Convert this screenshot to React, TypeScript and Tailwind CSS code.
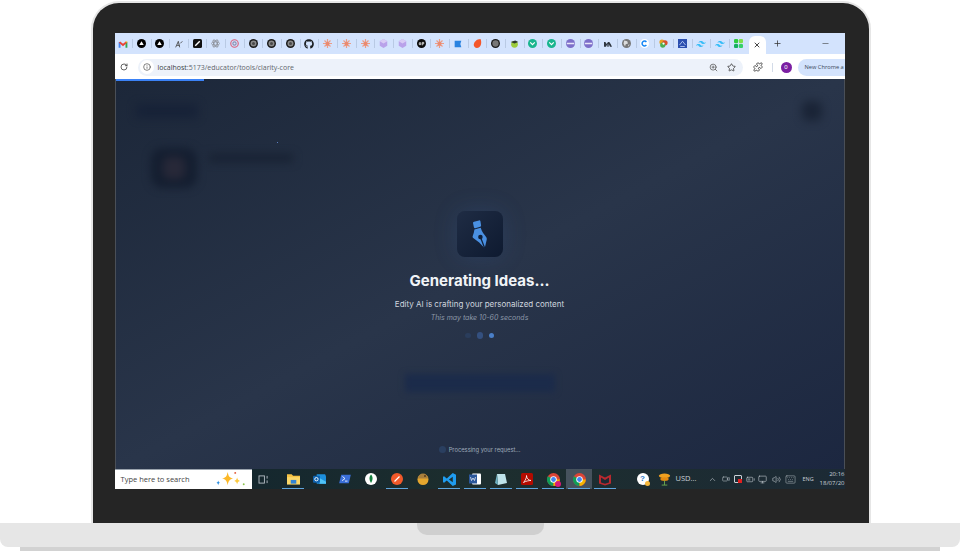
import React from "react";
import { RotateCw, Star, Puzzle, X, Plus, Minus, Info, ZoomIn, ChevronUp, Volume2, Monitor, Keyboard, BatteryMedium, Video } from "lucide-react";
import { FaGithub } from "react-icons/fa";
import { SiTailwindcss } from "react-icons/si";

const Gmail = () => (
  <svg viewBox="0 0 16 12" className="w-[10px] h-[8px]" fill="none" strokeWidth="3">
    <path d="M2.500 12V3" stroke="#4285f4" />
    <path d="M13.500 12V3" stroke="#34a853" />
    <path d="M2.500 3L8 7.500 13.500 3" stroke="#ea4335" />
    <path d="M13.500 3.500V2" stroke="#fbbc04" />
  </svg>
);
const Dot = ({ c, inner }: { c: string; inner?: React.ReactNode }) => (
  <svg viewBox="0 0 12 12" className="w-[9px] h-[9px]"><circle cx="6" cy="6" r="6" fill={c} />{inner}</svg>
);
const tri = <path d="M6 3l3 5H3z" fill="#fff" />;
const target = <><circle cx="6" cy="6" r="4" fill="#8a8a8a" /><circle cx="6" cy="6" r="2" fill="#4a4a4a" /></>;
const Asterisk = () => (
  <svg viewBox="0 0 12 12" className="w-[9px] h-[9px]" stroke="#ec9c86" strokeWidth="1.600"><path d="M6 0v12M0 6h12M2 2l8 8M10 2l-8 8" /><circle cx="6" cy="6" r="2.500" fill="#e98a70" stroke="none" /></svg>
);
const Cube = () => (
  <svg viewBox="0 0 12 12" className="w-[9px] h-[9px]"><path d="M6 0l5 3v6l-5 3-5-3V3z" fill="#b9a2ea" /><path d="M1 3l5 3 5-3-5-3z" fill="#d9ccf5" /></svg>
);
const Shield = () => (
  <svg viewBox="0 0 12 12" className="w-[9px] h-[9px]"><circle cx="6" cy="6" r="6" fill="#19b58e" /><path d="M3 4.500l3 3 3-3" stroke="#fff" strokeWidth="1.600" fill="none" /></svg>
);
const PurpleC = () => (
  <svg viewBox="0 0 12 12" className="w-[9px] h-[9px]"><circle cx="6" cy="6" r="6" fill="#7d6fc9" /><path d="M1 5h10v2H1z" fill="#e8e6f8" /></svg>
);
const Wind = () => <SiTailwindcss className="w-[10px] h-[10px] text-[#38bdf8]" />;

const tabs: React.ReactNode[] = [
  <Gmail />, <Dot c="#000" inner={tri} />, <Dot c="#000" inner={tri} />,
  <svg viewBox="0 0 12 12" className="w-[8px] h-[8px]"><path d="M1 11L5 2l2 9M8 5l3-3M3 8h4" stroke="#444" strokeWidth="1.300" fill="none" /></svg>,
  <svg viewBox="0 0 12 12" className="w-[9px] h-[9px]"><rect width="12" height="12" rx="2" fill="#111" /><path d="M3 9l6-6" stroke="#fff" strokeWidth="2" /></svg>,
  <svg viewBox="0 0 12 12" className="w-[9px] h-[9px]" fill="none" stroke="#8a8f98" strokeWidth="1.100"><ellipse cx="6" cy="6" rx="5.500" ry="2.200" /><ellipse cx="6" cy="6" rx="5.500" ry="2.200" transform="rotate(60 6 6)" /><ellipse cx="6" cy="6" rx="5.500" ry="2.200" transform="rotate(120 6 6)" /></svg>,
  <svg viewBox="0 0 12 12" className="w-[9px] h-[9px]" fill="none"><circle cx="6" cy="6" r="5" stroke="#d9607a" strokeWidth="1.500" /><circle cx="6" cy="6" r="2.200" stroke="#8a8fb0" strokeWidth="1.500" /></svg>,
  <Dot c="#1a1a1a" inner={target} />, <Dot c="#1a1a1a" inner={target} />, <Dot c="#1a1a1a" inner={target} />,
  <FaGithub className="w-[10px] h-[10px] text-[#1b1f23]" />,
  <Asterisk />, <Asterisk />, <Asterisk />, <Cube />, <Cube />,
  <Dot c="#0a0a0a" inner={<path d="M3 5v2.500h2V5zM7 4.500v4M7 4.500h2v2H7" stroke="#fff" strokeWidth="1" fill="none" />} />,
  <Asterisk />,
  <svg viewBox="0 0 12 12" className="w-[8px] h-[8px]"><path d="M1 1h10l-1.500 5L11 11H1z" fill="#2a83e0" /></svg>,
  <svg viewBox="0 0 12 12" className="w-[9px] h-[9px]"><path d="M1 8c0-4 4-8 9-8 2 4 1 12-5 12-2 0-4-2-4-4z" fill="#f4562a" /></svg>,
  <Dot c="#1a1a1a" inner={<circle cx="6" cy="6" r="4.200" fill="#777" />} />,
  <svg viewBox="0 0 12 12" className="w-[9px] h-[9px]"><circle cx="6" cy="7" r="4.500" fill="#9ccc3c" /><path d="M1 4l6-2 4 2-5 2z" fill="#2c3a2c" /></svg>,
  <Shield />, <Shield />, <PurpleC />, <PurpleC />,
  <svg viewBox="0 0 12 8" className="w-[8px] h-[6px]"><path d="M0 8V1h2l2 3 2-3h2l2 3 2 4H9L7 4v4H5V4L3 8z" fill="#2f3640" /></svg>,
  <Dot c="#777" inner={<path d="M3 2l4 1 1 3-3 1-1 3-2-4zM8 8l2-1-1 3z" fill="#dcdcdc" />} />,
  <Dot c="#fff" inner={<path d="M8.500 8a3.200 3.200 0 1 1 0-4" stroke="#1585f5" strokeWidth="2" fill="none" />} />,
  <svg viewBox="0 0 12 12" className="w-[9px] h-[9px]"><circle cx="4" cy="4" r="3.500" fill="#e8a020" /><circle cx="8" cy="5" r="3.500" fill="#d8502c" /><circle cx="5" cy="8" r="3.500" fill="#4caf50" /><circle cx="6" cy="6" r="1.500" fill="#fff" /></svg>,
  <svg viewBox="0 0 12 12" className="w-[9px] h-[9px]"><rect width="12" height="12" fill="#2b4fb0" /><path d="M2 8l4-5 4 5M3 10h6" stroke="#cfe0ff" fill="none" /></svg>,
  <Wind />, <Wind />,
  <svg viewBox="0 0 12 12" className="w-[9px] h-[9px]"><rect x="0" y="0" width="5.500" height="5.500" rx="1.500" fill="#2ecc40" /><rect x="6.500" y="0" width="5.500" height="5.500" rx="1.500" fill="#7de04a" /><rect x="0" y="6.500" width="5.500" height="5.500" rx="1.500" fill="#16b060" /><rect x="6.500" y="6.500" width="5.500" height="5.500" rx="1.500" fill="#36d06a" /></svg>,
];

const Folder = () => (
  <svg viewBox="0 0 14 12" className="w-[13px] h-[12px]"><path d="M0 1h5l1.500 1.500H14V11H0z" fill="#f6c244" /><rect x="0" y="4" width="14" height="8" fill="#fbd768" /><rect x="4" y="7" width="6" height="4" fill="#2f83d4" /></svg>
);
const ChromeIcon = ({ size }: { size: string }) => (
  <svg viewBox="0 0 12 12" className={size}><circle cx="6" cy="6" r="6" fill="#db4437" /><path d="M6 6L.8 3A6 6 0 0 0 6 12z" fill="#0f9d58" /><path d="M6 6h5.800A6 6 0 0 1 6 12z" fill="#f4b400" /><circle cx="6" cy="6" r="3" fill="#fff" /><circle cx="6" cy="6" r="2.200" fill="#4285f4" /></svg>
);

const apps: { el: React.ReactNode; on?: boolean; active?: boolean }[] = [
  { el: <Folder />, on: true },
  { el: <svg viewBox="0 0 14 12" className="w-[13px] h-[12px]"><path d="M4 1h9l1 2v8H4z" fill="#1d8fdc" /><path d="M7 5l7 4v2H7z" fill="#4fc3f7" /><rect y="2.500" width="7.500" height="7.500" rx="1" fill="#0f62ae" /><circle cx="3.700" cy="6.200" r="1.800" fill="none" stroke="#fff" /></svg> },
  { el: <svg viewBox="0 0 14 12" className="w-[12px] h-[10px]"><path d="M2.500 1H14l-2.500 10H0z" fill="#3a6fd8" /><path d="M4 3l3 2.500L3.500 8M7 8.500h3" stroke="#fff" fill="none" /></svg> },
  { el: <svg viewBox="0 0 12 12" className="w-[12px] h-[12px]"><circle cx="6" cy="6" r="6" fill="#fff" /><path d="M6 1.500c2 2 2.200 5 0 8.500-2.200-3.500-2-6.500 0-8.500z" fill="#13803f" /></svg> },
  { el: <svg viewBox="0 0 12 12" className="w-[12px] h-[12px]"><circle cx="6" cy="6" r="6" fill="#f1592a" /><path d="M3.500 8.500L8.500 3.500" stroke="#fff" strokeWidth="1.300" /></svg>, on: true },
  { el: <svg viewBox="0 0 12 12" className="w-[12px] h-[12px]"><circle cx="6" cy="6.500" r="5.500" fill="#e4a62e" /><path d="M1 5.500a5 5 0 0 1 10 0z" fill="#a97f3c" /><circle cx="8" cy="3" r="1" fill="#5a3b1a" /></svg> },
  { el: <svg viewBox="0 0 12 12" className="w-[13px] h-[13px]"><path d="M9 0l3 1.500v9L9 12 3.500 7 1 9 0 8.500v-5L1 3l2.500 2zM9 3.500L5.500 6 9 8.500z" fill="#1f9cf0" /></svg>, on: true },
  { el: <svg viewBox="0 0 12 12" className="w-[12px] h-[12px]"><rect x="3" y="0.500" width="9" height="11" rx="1" fill="#fff" /><rect x="0" y="1.500" width="8" height="9" fill="#2b579a" /><path d="M1.500 4l1 3.500L4 5l1.500 2.500L6.500 4" stroke="#fff" strokeWidth=".7" fill="none" /></svg>, on: true },
  { el: <svg viewBox="0 0 12 12" className="w-[12px] h-[12px]"><path d="M2 1h8l2 9-9 2z" fill="#bfe3ea" /><path d="M2 1L0 10l3 2z" fill="#6fb3c4" /></svg>, on: true },
  { el: <svg viewBox="0 0 12 12" className="w-[12px] h-[12px]"><rect width="12" height="12" rx="1.500" fill="#b30b00" /><path d="M2.500 9.500C4 8 6 4 5.500 2.500 5.500 5 7.500 7.500 10 7.500c-2 0-5 .5-7.500 2z" stroke="#fff" strokeWidth=".8" fill="none" /></svg>, on: true },
  { el: <div className="relative flex"><ChromeIcon size="w-[13px] h-[13px]" /><span className="absolute -right-[1px] -bottom-[1px] w-[6px] h-[6px] rounded-full bg-[#d81b7a]" /></div>, on: true },
  { el: <ChromeIcon size="w-[13px] h-[13px]" />, on: true, active: true },
  { el: <svg viewBox="0 0 12 12" className="w-[12px] h-[13px]"><path d="M0 1l6 3 6-3v9l-6 2-6-2z" fill="#b8292f" /><path d="M2 4l4 2.500L10 4v5l-4 1.300L2 9z" fill="#1d2a33" /></svg>, on: true },
];

const PenNib = () => (
  <svg viewBox="0 0 16 30" className="w-[16px] h-[30px]">
    <path d="M2 2.700l5-1.300q1.200-.2 1.500 1l.6 4q.1 1-.9 1.300l-5 1.500q-1 .2-1.300-.9L1 4q-.2-1 1-1.300z" fill="#4a90e2" />
    <path d="M2.400 10.600L8.700 8.800c1 4 3.500 6.500 5.600 9.500.6 1 .6 2 .3 3l-1.900 8-5.500-5.800L1.200 19c-.8-.8-.7-1.700-.3-2.600.8-2 1.300-3.800 1.500-5.800z" fill="#4a90e2" />
    <circle cx="8.400" cy="18" r="2.300" fill="#10203a" />
    <path d="M8.400 18l4.200 11" stroke="#10203a" strokeWidth="1.300" />
  </svg>
);

export default function App() {
  return (
    <div className="w-[961px] h-[551px] bg-white overflow-hidden font-['Liberation_Sans',sans-serif]">
      {/* lid */}
      <div className="ml-[91px] w-[780px] h-[522px] mt-[1px] rounded-t-[28px] border-x-[2.500px] border-t-2 border-[#e6e6e6] bg-[#252525] pt-[30px] pl-[21.500px]">
        <div className="w-[730px] h-[456px] flex flex-col overflow-hidden bg-white">
          {/* tab strip */}
          <div className="h-[21px] bg-[#d3e3fd] flex items-center shrink-0">
            <div className="-ml-[1.300px]" />
            {tabs.map((t, i) => (
              <div key={i} className="w-[18.670px] h-[21px] flex items-center justify-center relative shrink-0">
                {t}
                {i > 0 && <span className="absolute left-0 top-[6px] h-[9px] w-px bg-[#b9cae4]" />}
              </div>
            ))}
            <div className="w-[17px] h-[18px] mt-[3px] ml-px bg-white rounded-t-[6px] flex items-center justify-center shrink-0">
              <X className="w-[8px] h-[8px] text-[#222]" strokeWidth={2.500} />
            </div>
            <Plus className="w-[9px] h-[9px] ml-[7.500px] text-[#333]" strokeWidth={2} />
            <Minus className="w-[9px] h-[9px] ml-[39px] text-[#333]" strokeWidth={1.500} />
          </div>
          {/* address bar */}
          <div className="h-[25px] bg-white flex items-center shrink-0 pt-px">
            <RotateCw className="w-[8px] h-[8px] ml-[5px] text-[#444] shrink-0" strokeWidth={2.500} />
            <div className="ml-[10px] w-[605px] h-[17px] shrink-0 rounded-full bg-[#edf2fa] flex items-center">
              <div className="w-[14px] h-[14px] ml-[2px] rounded-full bg-white flex items-center justify-center">
                <Info className="w-[8px] h-[8px] text-[#444]" strokeWidth={2} />
              </div>
              <span className="ml-[4px] text-[7px] leading-none text-[#5f656c] font-['Open_Sans',sans-serif] whitespace-nowrap"><span className="text-[#3a3f45]">localhost</span>:5173/educator/tools/clarity-core</span>
              <div className="ml-auto flex items-center gap-[9px] mr-[7px]">
                <ZoomIn className="w-[9px] h-[9px] text-[#555]" strokeWidth={2} />
                <Star className="w-[9px] h-[9px] text-[#333]" strokeWidth={2} />
              </div>
            </div>
            <Puzzle className="w-[10px] h-[10px] ml-[10px] text-[#333] shrink-0" strokeWidth={2} />
            <span className="ml-[9px] h-[9px] w-px bg-[#d3dbe8] shrink-0" />
            <div className="ml-[8px] w-[11px] h-[11px] shrink-0 rounded-full bg-[#7b1fa2] text-white text-[6px] leading-none flex items-center justify-center">0</div>
            <div className="ml-[6px] flex-1 h-[17px] rounded-l-full bg-[#d3e3fd] flex items-center pl-[7px]">
              <span className="text-[5.700px] text-[#3c4a5c] whitespace-nowrap font-['Open_Sans',sans-serif]">New Chrome a</span>
            </div>
          </div>
          {/* page */}
          <div className="relative flex-1 overflow-hidden bg-gradient-to-br from-[#1c2739] via-[#29354a] to-[#1c2740] border-x border-[#4a4f57]">
            <div className="h-[2px] w-[88px] bg-[#3b82f6]" />
            <div className="flex items-center justify-between pl-[20px] pr-[22px] pt-[20px] blur-[5px] opacity-70">
              <div className="w-[62px] h-[14px] bg-[#141f36]" />
              <div className="w-[20px] h-[20px] rounded-md bg-[#141d2e]" />
            </div>
            <div className="flex items-center gap-[12px] pl-[35px] pt-[27px] blur-[4px]">
              <div className="w-[46px] h-[40px] rounded-xl bg-[#141e30] flex items-center justify-center">
                <div className="w-[22px] h-[22px] rounded-md bg-[#272838]" />
              </div>
              <div className="w-[84px] h-[8px] mb-[20px] bg-[#182233]" />
            </div>
            <span className="absolute left-[161px] top-[63px] w-px h-px bg-[#5b7fc0]" />
            {/* overlay content */}
            <div className="absolute inset-0 flex flex-col items-center">
              <div className="mt-[132px] w-[46px] h-[46px] rounded-[8px] bg-gradient-to-br from-[#1f2c44] to-[#0e1a30] flex items-center justify-center shadow-[0_0_24px_rgba(60,110,190,0.18)]">
                <PenNib />
              </div>
              <h1 className="mt-[14px] text-[15px] leading-[20px] font-bold text-[#f1f4f8] font-['Inter',sans-serif] whitespace-nowrap">Generating Ideas...</h1>
              <p className="mt-[7px] text-[8px] leading-[12px] text-[#d0d6df] font-['Inter',sans-serif] whitespace-nowrap">Edity AI is crafting your personalized content</p>
              <p className="mt-[2px] text-[7px] leading-[12px] italic text-[#8d98a8] font-['Inter',sans-serif] whitespace-nowrap">This may take 10-60 seconds</p>
              <div className="mt-[8px] flex items-center gap-[6px]">
                <span className="w-[5.500px] h-[5.500px] rounded-full bg-[#2a3d5c]" />
                <span className="w-[6.500px] h-[6.500px] rounded-full bg-[#34507f]" />
                <span className="w-[5px] h-[5px] rounded-full bg-[#4a7fc8]" />
              </div>
              <div className="mt-[35px] w-[150px] h-[18px] bg-[#1b2b4a] blur-[3px]" />
              <div className="mt-auto mb-[16px] flex items-center gap-[3px]">
                <span className="w-[7px] h-[7px] rounded-full bg-[#2a3f60]" />
                <span className="text-[5.800px] leading-none text-[#9ea9b8] font-['Inter',sans-serif] whitespace-nowrap">Processing your request...</span>
              </div>
            </div>
          </div>
          {/* taskbar */}
          <div className="h-[20px] bg-gradient-to-r from-[#10232e] via-[#1d2e2e] to-[#1c2a35] flex items-center shrink-0 overflow-hidden">
            <div className="w-[137px] h-[20px] bg-white flex items-center justify-between pl-[6px] pr-[6px] border-t border-[#9aa3ad] shrink-0">
              <span className="text-[7.500px] text-[#444] whitespace-nowrap font-['Open_Sans',sans-serif]">Type here to search</span>
              <svg viewBox="0 0 32 18" className="w-[31px] h-[17px]">
                <path d="M13 1c1 5 2 6 6 7-4 1-5 2-6 7-1-5-2-6-6-7 4-1 5-2 6-7z" fill="#fcb827" />
                <path d="M23 7c.6 2 1 3 3 3.500-2 .5-2.400 1.500-3 3.500-.6-2-1-3-3-3.500 2-.5 2.400-1.500 3-3.500z" fill="#fcc93f" />
                <path d="M3 10c.4 1.500.7 2 2 2.500-1.300.5-1.600 1-2 2.500-.4-1.500-.7-2-2-2.500 1.300-.5 1.600-1 2-2.500z" fill="#2a8ee0" />
                <circle cx="21" cy="2" r="1" fill="#e25a3a" /><circle cx="30" cy="14" r="1" fill="#8bc34a" />
              </svg>
            </div>
            <svg viewBox="0 0 12 10" className="w-[11px] h-[9px] ml-[6px] shrink-0" fill="none" stroke="#b8c0c8"><rect x="1" y="1" width="6" height="8" /><path d="M10 1v3M10 6v3" /></svg>
            <div className="flex ml-[11.500px] shrink-0">
              {apps.map((a, i) => (
                <div key={i} className={`w-[26px] h-[20px] flex items-center justify-center relative ${a.active ? "bg-[#46525d]" : ""}`}>
                  {a.el}
                  {a.on && <span className="absolute left-[2px] right-[2px] bottom-0 h-[1px] bg-[#5ea5dd]" />}
                </div>
              ))}
            </div>
            <div className="flex items-center ml-[18.500px] shrink-0 text-[#c9d0d6]">
              <div className="relative w-[12px] h-[12px] rounded-full bg-white flex items-center justify-center text-[8px] font-bold text-[#1e78c8]">?<span className="absolute -right-[1px] -bottom-[1px] w-[5px] h-[5px] rounded-full bg-[#f5b83d]" /></div>
              <svg viewBox="0 0 14 14" className="w-[13px] h-[13px] ml-[9.500px]"><ellipse cx="7" cy="3" rx="6" ry="2.500" fill="#f0a020" /><ellipse cx="7" cy="6.500" rx="4.500" ry="2" fill="#e68a10" /><path d="M7 8v5M4 13h6" stroke="#6aa84f" /></svg>
              <span className="ml-[4.500px] w-[21px] text-[7.500px] whitespace-nowrap font-['Open_Sans',sans-serif]">USD...</span>
              <ChevronUp className="w-[9px] h-[9px] ml-[11.500px]" strokeWidth={1.500} />
              <Video className="w-[8px] h-[8px] ml-[4.500px]" strokeWidth={1.500} />
              <div className="relative ml-[4px] w-[8px] h-[8px] border border-[#c9d0d6] rounded-[1px]"><span className="absolute -right-[1px] -bottom-[1px] w-[4px] h-[4px] bg-[#e02020]" /></div>
              <BatteryMedium className="w-[9px] h-[9px] ml-[4.500px]" strokeWidth={1.500} />
              <Monitor className="w-[9px] h-[9px] ml-[3px]" strokeWidth={1.500} />
              <Volume2 className="w-[9px] h-[9px] ml-[5px]" strokeWidth={1.500} />
              <Keyboard className="w-[13px] h-[11px] ml-[3px]" strokeWidth={1} />
              <span className="ml-[5.500px] w-[12px] text-[5.500px] whitespace-nowrap font-['Open_Sans',sans-serif]">ENG</span>
              <div className="ml-[7px] w-[23px] flex flex-col items-end text-[6px] leading-[9px] whitespace-nowrap font-['Open_Sans',sans-serif]">
                <span>20:16</span>
                <span>18/07/20</span>
              </div>
            </div>
          </div>
        </div>
      </div>
      {/* base */}
      <div className="relative h-[24px] w-[960px] bg-[#e6e6e6] rounded-b-[8px] flex justify-center">
        <div className="w-[127px] h-[12px] bg-[#cfcfcf] rounded-b-[10px]" />
      </div>
      <div className="ml-[20px] w-[920px] h-[4px] bg-[#d2d2d2]" />
    </div>
  );
}
